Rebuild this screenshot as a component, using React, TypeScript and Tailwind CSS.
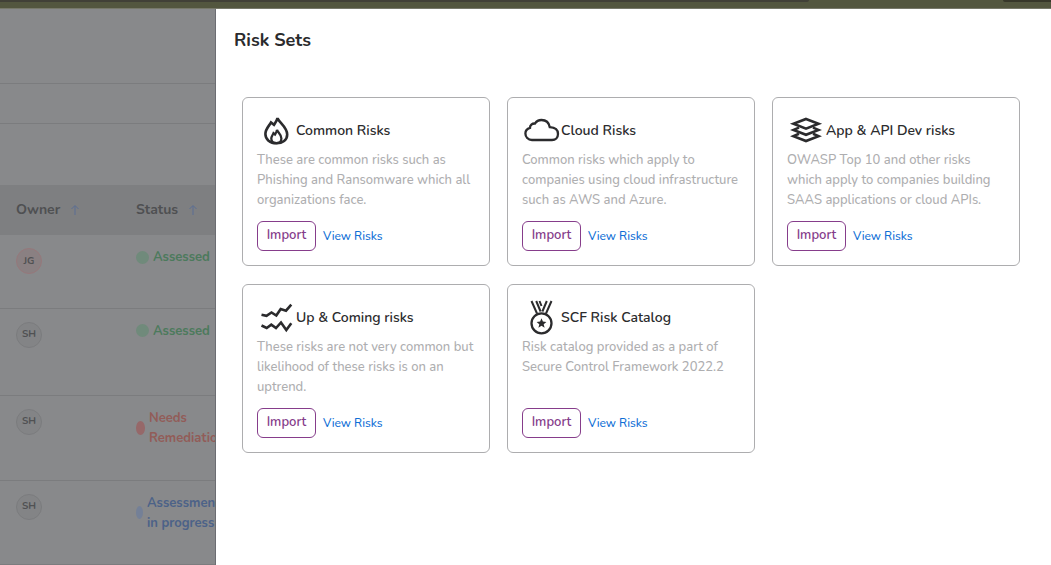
import type { ReactNode } from 'react'
import clsx from 'clsx'

interface RiskSet {
  title: string
  description: string
  icon: ReactNode
}

interface OwnerRow {
  initials: string
  status: string[]
  avatar: string
  text: string
  dot: string
  height: string
}

function IconFrame({ children }: { children: ReactNode }) {
  return (
    <svg
      viewBox="0 0 39 38"
      className="w-[39px] h-[38px] shrink-0"
      fill="none"
      stroke="#2b2b2d"
      strokeWidth="2.6"
      aria-hidden="true"
    >
      {children}
    </svg>
  )
}

const FlameIcon = () => (
  <IconFrame>
    <path d="M20.5 6C21 9.5 30.2 15 30.2 22.5C30.2 28 25.5 31.3 19.5 31.3C13 31.3 8.4 27.5 8.4 22C8.4 17 12 14 14 10.5L17 12.8C18.5 10.5 20 8.5 20.5 6Z" />
    <path d="M20 17.8C20.5 20.5 24.4 22 24.4 26.5C24.4 29.5 22 31.2 19.5 31.2C16.5 31.2 14.3 29.5 14.3 26.5C14.3 24.5 15.8 23 16.5 21.2L18 22.5C19 21 19.8 19.5 20 17.8Z" strokeWidth="2.3" />
  </IconFrame>
)

const CloudIcon = () => (
  <IconFrame>
    <path
      d="M10 28C6 28 3.4 25 3.4 21.5C3.4 18.5 5.3 16.5 8 15.8C8 13 10 11.3 13 11.5C14.5 9 17 8 19.5 8C24 8 27 11 27.8 15.2C33 15.5 36 18 36 22C36 25.5 33.5 28 30 28Z"
      strokeWidth="2.3"
    />
  </IconFrame>
)

const LayersIcon = () => (
  <IconFrame>
    <path d="M19 7L31.5 11.8L19 16.6L6.5 11.8Z" />
    <path d="M12 15.6L6.5 17.9L19 22.8L31.5 17.9L26 15.6" />
    <path d="M12 21.8L6.5 24.1L19 29L31.5 24.1L26 21.8" />
  </IconFrame>
)

const TrendIcon = () => (
  <IconFrame>
    <path d="M4.5 15.7L9.5 16.8L14.5 13.5L19.3 16.5L23.7 10L29 11.7L34.3 5.7" />
    <path d="M4.5 26.5L9.7 29L14.3 25.7L19 29L24 23.5L29.3 31L34.3 24.3" />
  </IconFrame>
)

const MedalIcon = () => (
  <IconFrame>
    <circle cx="19.5" cy="24.3" r="10" strokeWidth="2.3" />
    <path d="M9.5 2L15 14.5M14.2 2L18.6 12.5M29.5 2L24 14.5M24.8 2L20.4 12.5M17.5 2L19.5 7" strokeWidth="2" />
    <path
      d="M19.5 19.3L20.9 22.6L24.4 22.9L21.7 25.2L22.6 28.7L19.5 26.8L16.4 28.7L17.3 25.2L14.6 22.9L18.1 22.6Z"
      fill="#2b2b2d"
      stroke="none"
    />
  </IconFrame>
)

const riskSets: RiskSet[] = [
  {
    title: 'Common Risks',
    description: 'These are common risks such as Phishing and Ransomware which all organizations face.',
    icon: <FlameIcon />,
  },
  {
    title: 'Cloud Risks',
    description: 'Common risks which apply to companies using cloud infrastructure such as AWS and Azure.',
    icon: <CloudIcon />,
  },
  {
    title: 'App & API Dev risks',
    description: 'OWASP Top 10 and other risks which apply to companies building SAAS applications or cloud APIs.',
    icon: <LayersIcon />,
  },
  {
    title: 'Up & Coming risks',
    description: 'These risks are not very common but likelihood of these risks is on an uptrend.',
    icon: <TrendIcon />,
  },
  {
    title: 'SCF Risk Catalog',
    description: 'Risk catalog provided as a part of Secure Control Framework 2022.2',
    icon: <MedalIcon />,
  },
]

const grayAvatar = 'bg-[#838486] border-[#7b7c7e]'

const ownerRows: OwnerRow[] = [
  {
    initials: 'JG',
    status: ['Assessed'],
    avatar: 'bg-[#8a8082] border-[#96787b]',
    text: 'text-[#4c7a5c]',
    dot: 'w-[13px] h-[13px] bg-[#708a7b]',
    height: 'h-[73px]',
  },
  {
    initials: 'SH',
    status: ['Assessed'],
    avatar: grayAvatar,
    text: 'text-[#4c7a5c]',
    dot: 'w-[13px] h-[13px] bg-[#708a7b]',
    height: 'h-[87px]',
  },
  {
    initials: 'SH',
    status: ['Needs', 'Remediation'],
    avatar: grayAvatar,
    text: 'text-[#925c58]',
    dot: 'w-[9px] h-[14px] bg-[#966869]',
    height: 'h-[85px]',
  },
  {
    initials: 'SH',
    status: ['Assessment', 'in progress'],
    avatar: grayAvatar,
    text: 'text-[#4c6288]',
    dot: 'w-[7px] h-[13px] bg-[#748097]',
    height: 'h-[84px]',
  },
]

function HeaderCell({ label }: { label: string }) {
  return (
    <th className="pl-4 text-left text-sm font-bold text-[#4f5052]">
      <div className="flex items-center gap-[10px]">
        {label}
        <svg viewBox="0 0 10 12" className="w-[10px] h-3" fill="none" stroke="#5b6e94" aria-hidden="true">
          <path d="M5 11V2M1.5 5L5 1.5L8.5 5" />
        </svg>
      </div>
    </th>
  )
}

function DimmedTable() {
  return (
    <aside className="w-[216px] shrink-0 overflow-hidden bg-[#88898b] border-r border-[#6c6d72]">
      <div className="h-[75px] border-b border-[#7b7c7e]" />
      <div className="h-10 border-b border-[#7b7c7e]" />
      <div className="h-[61px]" />
      <table className="w-[240px] table-fixed border-collapse">
        <thead>
          <tr className="h-[50px] bg-[#7e7f81]">
            <HeaderCell label="Owner" />
            <HeaderCell label="Status" />
          </tr>
        </thead>
        <tbody>
          {ownerRows.map((row, i) => (
            <tr key={i} className={clsx('align-top border-b border-[#7b7c7e]', row.height)}>
              <td className="pl-4 pt-[13px]">
                <span
                  className={clsx(
                    'flex w-[26px] h-[26px] items-center justify-center rounded-full border text-[10px] font-bold text-[#505153]',
                    row.avatar
                  )}
                >
                  {row.initials}
                </span>
              </td>
              <td className="pl-4 pt-3">
                <div className={clsx('flex items-center gap-1 text-[13px] leading-5 font-bold', row.text)}>
                  <span className={clsx('shrink-0 rounded-[50%]', row.dot)} />
                  <span>
                    {row.status.map((line) => (
                      <span key={line} className="block whitespace-nowrap">
                        {line}
                      </span>
                    ))}
                  </span>
                </div>
              </td>
            </tr>
          ))}
        </tbody>
      </table>
    </aside>
  )
}

function RiskCard({ title, description, icon }: RiskSet) {
  return (
    <article className="flex flex-col rounded-md border border-[#adadaf] p-[14px]">
      <div className="flex items-center">
        {icon}
        <h2 className="text-sm font-semibold text-[#2b2b2d]">{title}</h2>
      </div>
      <p className="min-h-[60px] text-[13px] leading-5 font-medium text-[#aeaeb0]">{description}</p>
      <div className="mt-[11px] flex items-center gap-[7px]">
        <button
          type="button"
          className="h-[30px] w-[59px] rounded-md border border-[#863d8b] text-[13px] font-semibold text-[#863d8b]"
        >
          Import
        </button>
        <a href="#" className="text-xs font-medium text-[#0f6fd6]">
          View Risks
        </a>
      </div>
    </article>
  )
}

export default function App() {
  return (
    <div className="flex min-h-screen flex-col bg-white font-['Nunito','Open_Sans',sans-serif]">
      {/* Browser strip above the page */}
      <div className="flex h-[9px] justify-between border-b border-[#77786a] bg-[#53563f]">
        <div className="h-[2px] w-[77%] rounded-br-lg bg-[#414037]" />
        <div className="h-[2px] w-12 rounded-bl-lg bg-[#37372a]" />
      </div>

      <div className="flex flex-1">
        <DimmedTable />

        <main className="min-w-0 flex-1 pt-[17px] pl-[18px]">
          <h1 className="text-lg leading-7 font-bold text-[#2b2b2d]">Risk Sets</h1>
          <section className="mt-[43px] mr-[31px] ml-2 grid grid-cols-3 gap-x-[17px] gap-y-[18px]">
            {riskSets.map((set) => (
              <RiskCard key={set.title} {...set} />
            ))}
          </section>
        </main>
      </div>
    </div>
  )
}
